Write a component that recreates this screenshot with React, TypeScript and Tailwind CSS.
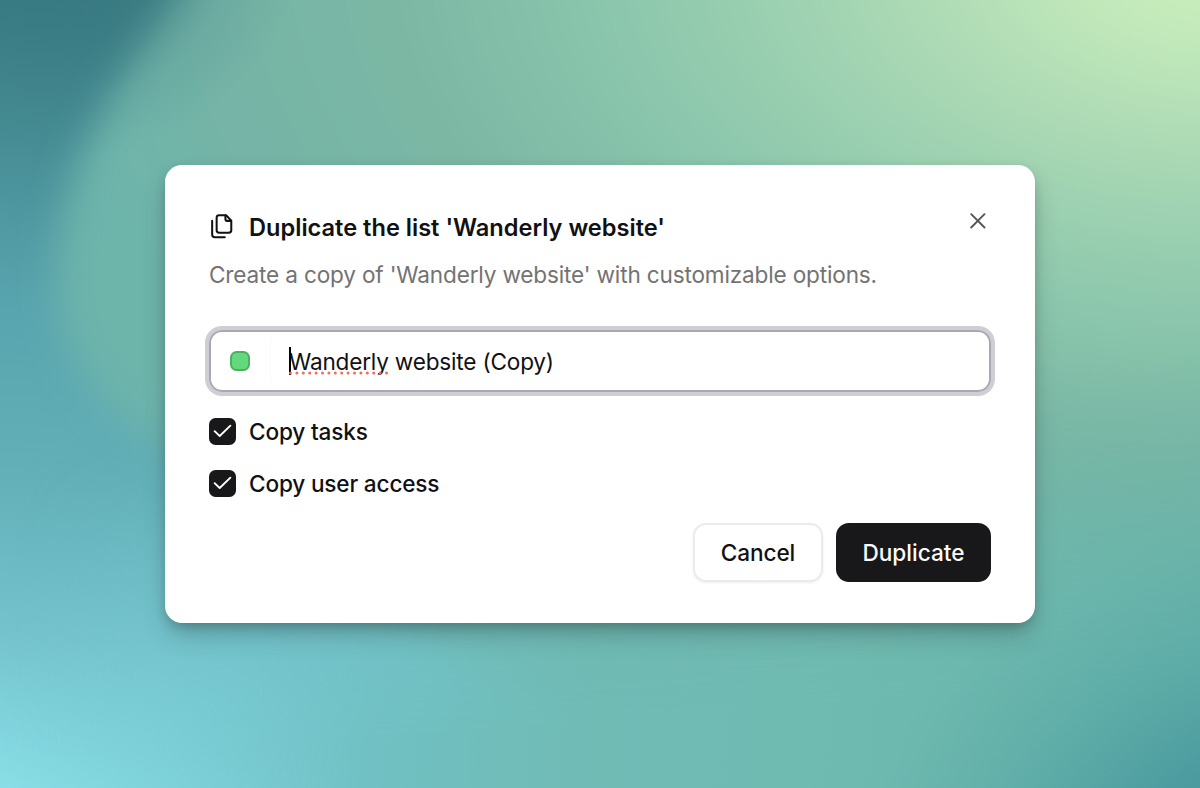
import { useState } from 'react'

function Backdrop() {
  return (
    <svg
      className="absolute inset-0 h-full w-full"
      viewBox="0 0 1200 788"
      preserveAspectRatio="none"
      aria-hidden="true"
    >
      <defs>
        <linearGradient id="sea" gradientUnits="userSpaceOnUse" x1="30" y1="0" x2="-40" y2="788">
          <stop offset="0" stopColor="#3a7b82" />
          <stop offset="0.16" stopColor="#458b93" />
          <stop offset="0.38" stopColor="#58a4ae" />
          <stop offset="0.6" stopColor="#63b0b8" />
          <stop offset="0.8" stopColor="#74c3cd" />
          <stop offset="1" stopColor="#8ae0e8" />
        </linearGradient>
        <radialGradient
          id="leaf"
          gradientUnits="userSpaceOnUse"
          cx="0"
          cy="0"
          r="1"
          gradientTransform="translate(1230 -40) scale(1190 690)"
        >
          <stop offset="0" stopColor="#cdf0bd" />
          <stop offset="0.12" stopColor="#c2e9ba" />
          <stop offset="0.26" stopColor="#aedbb5" />
          <stop offset="0.4" stopColor="#9acfb0" />
          <stop offset="0.54" stopColor="#89c5ac" />
          <stop offset="0.7" stopColor="#7cb7a4" />
          <stop offset="0.88" stopColor="#74b4a6" />
          <stop offset="1" stopColor="#6db4ab" />
        </radialGradient>
        <linearGradient id="shore" gradientUnits="userSpaceOnUse" x1="0" y1="760" x2="1200" y2="840">
          <stop offset="0" stopColor="#76c8d0" stopOpacity="0" />
          <stop offset="0.12" stopColor="#76c8d0" stopOpacity="0.45" />
          <stop offset="0.3" stopColor="#70c1c4" />
          <stop offset="0.48" stopColor="#70bbb5" />
          <stop offset="0.7" stopColor="#6fbab0" />
          <stop offset="1" stopColor="#66b3aa" />
        </linearGradient>
        <linearGradient id="rise" gradientUnits="userSpaceOnUse" x1="600" y1="400" x2="625" y2="720">
          <stop offset="0" stopColor="#000" />
          <stop offset="0.25" stopColor="#333" />
          <stop offset="0.7" stopColor="#ccc" />
          <stop offset="1" stopColor="#fff" />
        </linearGradient>
        <mask id="riseMask" maskUnits="userSpaceOnUse" x="0" y="0" width="1200" height="788">
          <rect width="1200" height="788" fill="url(#rise)" />
        </mask>
        <radialGradient
          id="deep"
          gradientUnits="userSpaceOnUse"
          cx="0"
          cy="0"
          r="1"
          gradientTransform="translate(60 -30) rotate(-8) scale(240 190)"
        >
          <stop offset="0" stopColor="#377980" stopOpacity="0.8" />
          <stop offset="0.4" stopColor="#3a7c83" stopOpacity="0.5" />
          <stop offset="0.7" stopColor="#3f8188" stopOpacity="0.18" />
          <stop offset="1" stopColor="#3f8188" stopOpacity="0" />
        </radialGradient>
        <radialGradient
          id="corner"
          gradientUnits="userSpaceOnUse"
          cx="0"
          cy="0"
          r="1"
          gradientTransform="translate(1240 830) rotate(-20) scale(420 290)"
        >
          <stop offset="0" stopColor="#48979c" />
          <stop offset="0.25" stopColor="#4a999e" stopOpacity="0.9" />
          <stop offset="0.6" stopColor="#50a0a2" stopOpacity="0.4" />
          <stop offset="1" stopColor="#5aa9a6" stopOpacity="0" />
        </radialGradient>
        <filter id="soft" x="-20%" y="-20%" width="140%" height="140%">
          <feGaussianBlur stdDeviation="18" />
        </filter>
      </defs>
      <rect width="1200" height="788" fill="url(#sea)" />
      <path
        d="M245 -90 C140 20 56 160 56 285 C62 375 120 430 200 465 C320 510 400 640 560 720 C800 850 1000 860 1300 860 L1300 -90Z"
        fill="url(#leaf)"
        filter="url(#soft)"
      />
      <rect width="1200" height="788" fill="url(#shore)" mask="url(#riseMask)" />
      <rect width="1200" height="788" fill="url(#corner)" />
      <rect width="400" height="300" fill="url(#deep)" />
    </svg>
  )
}

function FilesIcon() {
  return (
    <svg
      className="mt-[-2px] size-[27px] shrink-0"
      viewBox="0 0 24 24"
      fill="none"
      stroke="currentColor"
      strokeWidth="1.8"
      strokeLinecap="round"
      strokeLinejoin="round"
    >
      <path d="M15.2 2H9C7.6 2 6.8 2.8 6.8 4.2V15.3C6.8 16.7 7.6 17.5 9 17.5H17.6C19 17.5 19.8 16.7 19.8 15.3V6.8L15.2 2Z" />
      <path d="M2.8 7V19C2.8 20.7 3.6 21.5 5.3 21.5H14" />
      <path d="M14.6 2.2V5.6C14.6 6.5 15.1 7 16 7H19.6" />
    </svg>
  )
}

type OptionProps = {
  label: string
  checked: boolean
  onChange: (checked: boolean) => void
}

function Option({ label, checked, onChange }: OptionProps) {
  return (
    <div className="flex h-[26px] items-center gap-[13px]">
      <button
        role="checkbox"
        aria-checked={checked}
        aria-label={label}
        onClick={() => onChange(!checked)}
        className="size-[27px] shrink-0 rounded-[6.5px] bg-[#18181b] text-white"
      >
        {checked && (
          <svg viewBox="0 0 26 26" className="size-[27px]" fill="none" stroke="currentColor">
            <path d="M5.4 12.7L10.3 17.3L20.6 7.4" strokeWidth="1.8" strokeLinecap="round" strokeLinejoin="round" />
          </svg>
        )}
      </button>
      <span className="pt-[2px] text-[22.6px] leading-[26px] font-medium tracking-[-0.17px]">{label}</span>
    </div>
  )
}

export default function App() {
  const [copyTasks, setCopyTasks] = useState(true)
  const [copyAccess, setCopyAccess] = useState(true)

  return (
    <div className="relative flex h-screen w-full items-center justify-center overflow-hidden font-['Inter',sans-serif] text-[#111113]">
      <Backdrop />

      <div
        role="dialog"
        className="relative flex h-[458px] w-[870px] flex-col rounded-[17px] bg-white px-[44px] pt-[48px] shadow-[0_14px_26px_-4px_rgba(40,60,60,0.32),0_5px_12px_-3px_rgba(40,60,60,0.35)]"
      >
        {/* Header */}
        <div className="flex h-[28px] items-center gap-[13px]">
          <FilesIcon />
          <h2 className="pt-[2px] text-[23.6px] leading-[28px] font-semibold whitespace-nowrap">
            Duplicate the list 'Wanderly website'
          </h2>
          <button aria-label="Close" className="mt-[-12px] mr-[5px] ml-auto text-[#555]">
            <svg viewBox="0 0 16 16" className="size-[16px]" fill="none" stroke="currentColor">
              <path d="M1.2 1.2L14.5 14.5M14.5 1.2L1.2 14.5" strokeWidth="1.9" strokeLinecap="round" />
            </svg>
          </button>
        </div>
        <p className="mt-[20px] text-[22.6px] leading-[28px] tracking-[-0.17px] whitespace-nowrap text-[#737373]">
          Create a copy of 'Wanderly website' with customizable options.
        </p>

        {/* Name field */}
        <div className="mt-[41px] flex h-[62px] shrink-0 items-center rounded-[13px] border-2 border-[#aaa9b3] ring-[4px] ring-[#cfced4]">
          <div className="flex w-[59px] items-center pl-[19px]">
            <span className="size-[20px] rounded-[6.5px] border-2 border-[#4bb060] bg-[#63d97c]" />
          </div>
          <div className="flex h-full flex-1 items-center rounded-l-[12px] border-l border-[#fafafa] pl-[18px]">
            <div className="relative pt-[2px] text-[22.6px] leading-[28px] tracking-[-0.2px]">
              Wanderly website (Copy)
              <span className="absolute top-[1px] left-0 h-[28px] w-[2px] bg-black" />
              <svg className="absolute top-[25px] left-0 h-[4px] w-[100px]" viewBox="0 0 100 4">
                <path d="M1.5 2H98" stroke="#f26b5e" strokeWidth="3" strokeLinecap="round" strokeDasharray="0 6.4" />
              </svg>
            </div>
          </div>
        </div>

        {/* Options */}
        <div className="mt-[26px] flex flex-col gap-[26px]">
          <Option label="Copy tasks" checked={copyTasks} onChange={setCopyTasks} />
          <Option label="Copy user access" checked={copyAccess} onChange={setCopyAccess} />
        </div>

        {/* Footer */}
        <div className="mt-[27px] flex h-[59px] justify-end gap-[13px]">
          <button className="w-[130px] rounded-[13px] border-2 border-[#ebebed] bg-white text-[22.6px] font-medium tracking-[-0.1px] shadow-[0_1px_3px_rgba(0,0,0,0.07)]">
            Cancel
          </button>
          <button className="w-[155px] rounded-[13px] bg-[#18181b] text-[22.6px] font-medium text-[#fafafa]">
            Duplicate
          </button>
        </div>
      </div>
    </div>
  )
}
